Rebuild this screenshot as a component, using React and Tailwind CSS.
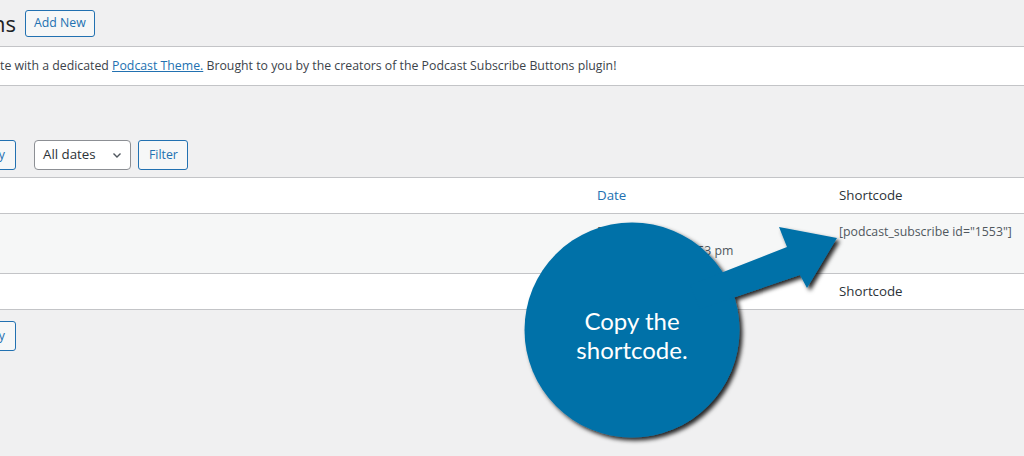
import React from 'react';

const Btn = ({ children, className = '' }) => (
  <button className={`h-[30px] rounded-[3px] border border-[#2271b1] bg-[#f6f7f7] px-[10px] text-[12.3px] text-[#2271b1] leading-none ${className}`}>
    {children}
  </button>
);

const Callout = () => (
  <div className="pointer-events-none absolute left-[500px] top-[200px] h-[256px] w-[360px]">
    <svg width="360" height="256" viewBox="0 0 360 256" className="absolute inset-0">
      <defs>
        <filter id="sh" x="-20%" y="-20%" width="140%" height="140%">
          <feDropShadow dx="3" dy="3" stdDeviation="2" floodColor="#000" floodOpacity="0.85" />
        </filter>
      </defs>
      <g filter="url(#sh)" fill="#0071a8">
        <circle cx="132" cy="130" r="107.5" />
        <polygon points="190,85 287,47 279,27 337,38 307,88 300,75 200,109" />
      </g>
    </svg>
    <div className="absolute left-[32px] top-[106px] w-[200px] text-center font-['Lato'] text-[24px] leading-[29px] text-white">
      Copy the<br />shortcode.
    </div>
  </div>
);

export default function App() {
  return (
    <div className="relative h-[456px] w-[1024px] overflow-hidden bg-[#f0f0f1] font-['Open_Sans',sans-serif] text-[12.3px] text-[#3c434a]">
      {/* title */}
      <div className="flex h-[37px] items-center gap-[9px] pt-[10px]">
        <h1 className="-ml-[8px] text-[22px] leading-[27px] text-[#1d2327]">ns</h1>
        <button className="h-[27px] rounded-[3px] border border-[#2271b1] bg-[#f6f7f7] px-[8px] text-[12.3px] font-medium leading-none text-[#2271b1]">Add New</button>
      </div>

      {/* notice */}
      <div className="mt-[9px] flex h-[40px] items-center border-y border-[#c3c4c7] bg-white">
        <p>
          te with a dedicated <a className="text-[#2271b1] underline">Podcast Theme.</a> Brought to you by the creators of the Podcast Subscribe Buttons plugin!
        </p>
      </div>

      {/* filters */}
      <div className="mt-[54px] flex items-center">
        <Btn className="-ml-[40px] w-[56px] text-right">Apply</Btn>
        <div className="ml-[18px] flex h-[30px] w-[97px] items-center justify-between rounded-[4px] border border-[#8c8f94] bg-white pl-[8px] pr-[6px] text-[13.3px] text-[#2c3338]">
          All dates
          <svg width="14" height="14" viewBox="0 0 20 20"><path d="M5 8l5 5 5-5" fill="none" stroke="#50575e" strokeWidth="2" /></svg>
        </div>
        <Btn className="ml-[7px] w-[50px] px-0">Filter</Btn>
      </div>

      {/* table */}
      <div className="mt-[7px] border-y border-[#c3c4c7] bg-white">
        <div className="grid h-[36px] grid-cols-[587px_242px_1fr] items-center border-b border-[#c3c4c7] text-[13.3px]">
          <div />
          <div className="px-[10px] text-[#2271b1]">Date</div>
          <div className="px-[10px] text-[#2c3338]">Shortcode</div>
        </div>
        <div className="grid h-[60px] grid-cols-[587px_242px_1fr] border-b border-[#c3c4c7] bg-[#f6f7f7] pt-[8px] leading-[19px]">
          <div />
          <div className="whitespace-nowrap px-[10px] text-[#50575e]">Published<br />2021/01/13 at 12:53 pm</div>
          <div className="whitespace-nowrap px-[10px] text-[#50575e]">[podcast_subscribe id="1553"]</div>
        </div>
        <div className="grid h-[35px] grid-cols-[587px_242px_1fr] items-center text-[13.3px]">
          <div />
          <div />
          <div className="px-[10px] text-[#2c3338]">Shortcode</div>
        </div>
      </div>

      <div className="mt-[11px] flex">
        <Btn className="-ml-[40px] w-[56px] text-right">Apply</Btn>
      </div>

      <Callout />
    </div>
  );
}
